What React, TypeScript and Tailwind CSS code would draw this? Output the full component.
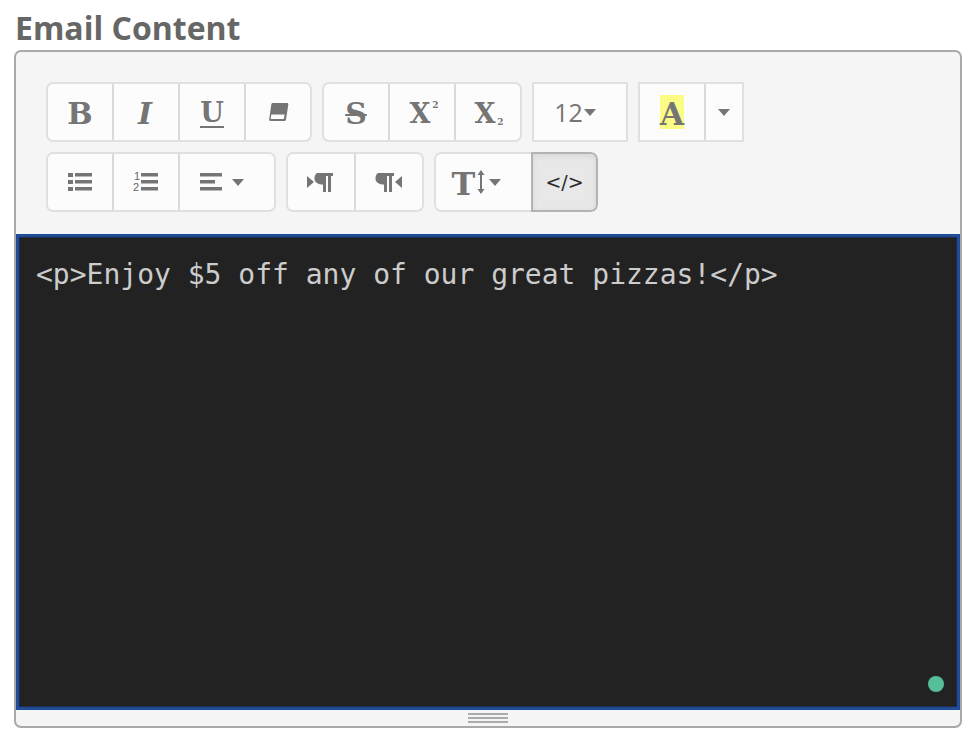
import type { ReactNode } from 'react';

const serif = "font-['DejaVu_Serif',serif] font-bold text-[#757575]";

function Caret({ className = '' }: { className?: string }) {
  return (
    <svg width="12" height="7" viewBox="0 0 12 7" className={className}>
      <path d="M0 0h12L6 7z" fill="#757575" />
    </svg>
  );
}

function Btn({ w, children, last, className = '' }: { w: string; children: ReactNode; last?: boolean; className?: string }) {
  return (
    <div className={`${w} h-full flex items-center justify-center ${last ? '' : 'border-r-2 border-[#d9d9d9]'} ${className}`}>
      {children}
    </div>
  );
}

function Group({ children, square }: { children: ReactNode; square?: boolean }) {
  return (
    <div className={`flex h-[60px] overflow-hidden border-2 border-[#e0e0e0] bg-[#fcfcfc] ${square ? '' : 'rounded-[7px]'}`}>
      {children}
    </div>
  );
}

function ListIcon() {
  return (
    <svg width="26" height="20" viewBox="0 0 26 20" fill="#757575">
      <rect x="1" y="1" width="5" height="4" />
      <rect x="1" y="8" width="5" height="4" />
      <rect x="1" y="15" width="5" height="4" />
      <rect x="8" y="1" width="17" height="3.5" />
      <rect x="8" y="8" width="17" height="3.5" />
      <rect x="8" y="15" width="17" height="3.5" />
    </svg>
  );
}

function OrderedIcon() {
  return (
    <div className="relative w-[26px] h-[22px]">
      <span className="absolute left-[1px] -top-[1px] text-[11px] leading-[12px] text-[#666666] font-['Liberation_Sans',sans-serif]">1</span>
      <span className="absolute left-0 top-[10px] text-[11px] leading-[12px] text-[#666666] font-['Liberation_Sans',sans-serif]">2</span>
      <svg width="26" height="22" viewBox="0 0 26 22" fill="#757575">
        <rect x="8" y="2" width="17" height="3.5" />
        <rect x="8" y="9" width="17" height="3.5" />
        <rect x="8" y="16" width="17" height="3.5" />
      </svg>
    </div>
  );
}

function AlignIcon() {
  return (
    <svg width="23" height="18" viewBox="0 0 23 18" fill="#757575">
      <rect x="0" y="0" width="22" height="3.5" />
      <rect x="0" y="7" width="15" height="3.5" />
      <rect x="0" y="14" width="22" height="3.5" />
    </svg>
  );
}

function Eraser() {
  return (
    <svg width="21" height="20" viewBox="0 0 21 20">
      <path d="M5 1h14c1 0 1.500.7 1.300 1.700L18 17.500c-.2 1-1 1.500-2 1.500H2.500c-1 0-1.500-.7-1.300-1.700L3.300 2.500C3.500 1.500 4 1 5 1z" fill="#757575" />
      <path d="M3.300 12.500h13.300l-.8 4.500H2.700z" fill="#fcfcfc" />
    </svg>
  );
}

function Pilcrow({ dir }: { dir: 'ltr' | 'rtl' }) {
  const mark = (
    <path d="M7 0h16v3h-2v16h-3V3h-2v16h-3V11.500C8.500 11.500 4.500 9.500 4.500 5.500S7 0 7 0z" fill="#757575" />
  );
  return (
    <svg width="28" height="19" viewBox="0 0 28 19">
      {dir === 'ltr' ? (
        <g>
          <path d="M0 3l7 6-7 6z" fill="#757575" />
          <g transform="translate(3 0)">{mark}</g>
        </g>
      ) : (
        <g>
          <g transform="translate(-4 0)">{mark}</g>
          <path d="M27 3l-7 6 7 6z" fill="#757575" />
        </g>
      )}
    </svg>
  );
}

export default function App() {
  return (
    <div className="w-[968px] h-[736px] bg-white pl-[14px] pr-[6px] pt-[6px] overflow-hidden font-['Open_Sans',sans-serif]">
      <h2 className="text-[32px] leading-[44px] font-bold text-[#666666] pl-[1px]">Email Content</h2>
      <div className="w-[948px] h-[678px] border-2 border-[#a9a9a9] rounded-[7px] bg-[#f5f5f5] flex flex-col overflow-hidden">
        <div className="h-[182px] pl-[30px] pt-[30px] flex flex-col gap-[10px]">
          <div className="flex gap-[10px]">
            <Group>
              <Btn w="w-[66px]"><span className={`${serif} text-[30px] mt-[2px]`}>B</span></Btn>
              <Btn w="w-[66px]"><span className={`${serif} italic text-[30px] mt-[2px] mr-[2px]`}>I</span></Btn>
              <Btn w="w-[66px]">
                <span className={`${serif} text-[27px] leading-[26px] mt-[4px] border-b-2 border-[#757575]`}>U</span>
              </Btn>
              <Btn w="w-[64px]" last><Eraser /></Btn>
            </Group>
            <Group>
              <Btn w="w-[66px]">
                <span className={`${serif} text-[30px] mt-[2px] line-through decoration-2`}>S</span>
              </Btn>
              <Btn w="w-[66px]">
                <span className={`${serif} text-[27px] mt-[4px] ml-[4px]`}>X</span>
                <span className={`${serif} text-[9px] mb-[12px] ml-[2px]`}>2</span>
              </Btn>
              <Btn w="w-[64px]" last>
                <span className={`${serif} text-[27px] mt-[4px] ml-[2px]`}>X</span>
                <span className={`${serif} text-[9px] mt-[22px] ml-[2px]`}>2</span>
              </Btn>
            </Group>
            <Group square>
              <Btn w="w-[92px]" last className="pr-[10px]">
                <span className="text-[25px] text-[#757575] leading-none">12</span>
                <Caret className="ml-[1px]" />
              </Btn>
            </Group>
            <Group square>
              <Btn w="w-[66px]">
                <span className="relative block w-[24px] h-[34px] bg-[#fbfb86]">
                  <span className={`${serif} absolute left-[-2px] top-[-4px] w-[28px] text-center text-[31px] leading-[46px]`}>A</span>
                </span>
              </Btn>
              <Btn w="w-[36px]" last><Caret /></Btn>
            </Group>
          </div>
          <div className="flex gap-[10px]">
            <Group>
              <Btn w="w-[66px]"><ListIcon /></Btn>
              <Btn w="w-[66px]"><OrderedIcon /></Btn>
              <Btn w="w-[94px]" last className="pr-[10px]">
                <AlignIcon />
                <Caret className="ml-[9px]" />
              </Btn>
            </Group>
            <Group>
              <Btn w="w-[68px]"><Pilcrow dir="ltr" /></Btn>
              <Btn w="w-[66px]" last><Pilcrow dir="rtl" /></Btn>
            </Group>
            <div className="flex h-[60px] rounded-[7px] overflow-hidden">
              <div className="w-[97px] h-full flex items-center justify-center pr-[14px] border-2 border-r-0 border-[#e0e0e0] rounded-l-[7px] bg-[#fcfcfc]">
                <span className={`${serif} text-[32px] leading-none mt-[3px]`}>T</span>
                <svg width="10" height="24" viewBox="0 0 10 24" className="mx-[1px]">
                  <path d="M5 0l3.500 5H6v14h2.500L5 24l-3.500-5H4V5H1.500z" fill="#757575" />
                </svg>
                <Caret className="ml-[2px]" />
              </div>
              <div className="w-[67px] h-full flex items-center justify-center border-2 border-[#b3b3b3] rounded-r-[7px] bg-[#e8e8e8] shadow-[inset_0_2px_6px_rgba(0,0,0,0.08)]">
                <span className="text-[19px] leading-none text-[#2b2b2b] font-['DejaVu_Sans',sans-serif]">&lt;/&gt;</span>
              </div>
            </div>
          </div>
        </div>
        <div className="relative h-[476px] border-[3px] border-[#1f4c96] shadow-[inset_0_0_0_1px_#1b2c4a] bg-[#222222] pl-[17px] pt-[18px]">
          <p className="font-['DejaVu_Sans_Mono',monospace] text-[28px] leading-[40px] text-[#cccccc] whitespace-pre">
            {'<p>Enjoy $5 off any of our great pizzas!</p>'}
          </p>
          <div className="absolute right-[13px] bottom-[15px] w-4 h-4 rounded-full bg-[#55bf99]" />
        </div>
        <div className="flex-1 flex flex-col items-center pt-[3px] gap-[2px]">
          <div className="w-[40px] h-[2px] bg-[#ababab]" />
          <div className="w-[40px] h-[2px] bg-[#ababab]" />
          <div className="w-[40px] h-[2px] bg-[#ababab]" />
        </div>
      </div>
    </div>
  );
}
